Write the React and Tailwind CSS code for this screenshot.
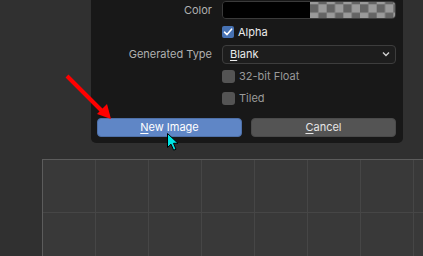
import React from "react";

const font = { fontFamily: "Inter, 'DejaVu Sans', sans-serif" };

function Checker() {
  return (
    <svg width="100%" height="100%" className="block">
      <defs>
        <pattern id="chk" width="16.67" height="16.67" patternUnits="userSpaceOnUse" x="0" y="2.3">
          <rect width="16.67" height="16.67" fill="#9a9a9a" />
          <rect x="0" y="0" width="8.33" height="8.33" fill="#646464" />
          <rect x="8.33" y="8.33" width="8.34" height="8.34" fill="#646464" />
        </pattern>
      </defs>
      <rect width="100%" height="100%" fill="url(#chk)" />
    </svg>
  );
}

function CheckRow({ label, checked }) {
  return (
    <div className="h-[22px] flex items-center pl-[131px]">
      <div
        className={
          checked
            ? "w-[12px] h-[12px] rounded-[2px] bg-[#4772b3] flex items-center justify-center"
            : "w-[13px] h-[13px] rounded-[3px] bg-[#545454]"
        }
      >
        {checked && (
          <svg width="10" height="10" viewBox="0 0 10 10">
            <path d="M1.5 5.2 L4 7.6 L8.6 2.2" stroke="#ffffff" strokeWidth="1.6" fill="none" strokeLinecap="round" strokeLinejoin="round" />
          </svg>
        )}
      </div>
      <span className={checked ? "ml-[4px] text-[11px] text-[#ebebeb]" : "ml-[4px] text-[11px] text-[#9a9a9a]"}>
        {label}
      </span>
    </div>
  );
}

export default function App() {
  return (
    <div className="relative w-[423px] h-[256px] overflow-hidden bg-[#303030]" style={font}>
      {/* background grid */}
      <div className="pt-[159px] pl-[42px]">
        <div className="border-l border-t border-[#5c5c5c] bg-[#393939] w-[400px]">
          {[0, 1].map((r) => (
            <div key={r} className="flex">
              {[0, 1, 2, 3, 4, 5, 6, 7].map((c) => (
                <div key={c} className="w-[53px] h-[53px] shrink-0 border-r border-b border-[#464646]" />
              ))}
            </div>
          ))}
        </div>
      </div>

      {/* popup panel */}
      <div className="absolute left-[91px] top-[-1px] w-[312px] h-[144px] bg-[#181818] rounded-b-[5px] flex flex-col">
        <div className="h-[22px] flex items-center">
          <div className="w-[121px] text-right text-[11px] text-[#b0b0b0]">Color</div>
          <div className="ml-[10px] w-[174px] h-[18px] rounded-[4px] border border-[#3a3a3a] overflow-hidden flex">
            <div className="w-[87px] h-full bg-black" />
            <div className="flex-1 h-full">
              <Checker />
            </div>
          </div>
        </div>
        <CheckRow label="Alpha" checked />
        <div className="h-[22px] flex items-center">
          <div className="w-[121px] text-right text-[11px] text-[#b0b0b0]">Generated Type</div>
          <div className="ml-[10px] w-[174px] h-[19px] rounded-[4px] border border-[#3d3d3d] bg-[#1d1d1d] flex items-center justify-between pl-[7px] pr-[5px]">
            <span className="text-[11px] text-[#ebebeb]">
              <span className="underline underline-offset-2">B</span>lank
            </span>
            <svg width="8" height="6" viewBox="0 0 8 6">
              <path d="M1 1.5 L4 4.5 L7 1.5" stroke="#cfcfcf" strokeWidth="1.4" fill="none" />
            </svg>
          </div>
        </div>
        <CheckRow label="32-bit Float" />
        <CheckRow label="Tiled" />
        <div className="flex gap-[9px] pl-[6px] mt-[9px]">
          <div className="w-[145px] h-[19px] rounded-[4px] bg-[#5f86c6] border border-[#4e70a8] flex items-center justify-center text-[11px] text-white">
            <span>
              <span className="underline underline-offset-2">N</span>ew Image
            </span>
          </div>
          <div className="w-[145px] h-[19px] rounded-[4px] bg-[#545454] border border-[#4a4a4a] flex items-center justify-center text-[11px] text-[#e6e6e6]">
            <span>
              <span className="underline underline-offset-2">C</span>ancel
            </span>
          </div>
        </div>
      </div>

      {/* red arrow annotation */}
      <svg className="absolute left-0 top-0 pointer-events-none" width="423" height="256">
        <line x1="67" y1="76" x2="102" y2="111" stroke="#ff0000" strokeWidth="4" />
        <polygon points="111,119 97,114 107,104" fill="#ff0000" />
      </svg>

      {/* cursor */}
      <svg className="absolute left-[167px] top-[133px]" width="14" height="20" viewBox="0 0 14 20">
        <path d="M0.5 0.5 L0.5 14.5 L4 11.2 L6.6 17.2 L9 16.2 L6.5 10.3 L11 10.3 Z" fill="#00e5e5" stroke="#000000" strokeWidth="1" />
      </svg>
    </div>
  );
}
